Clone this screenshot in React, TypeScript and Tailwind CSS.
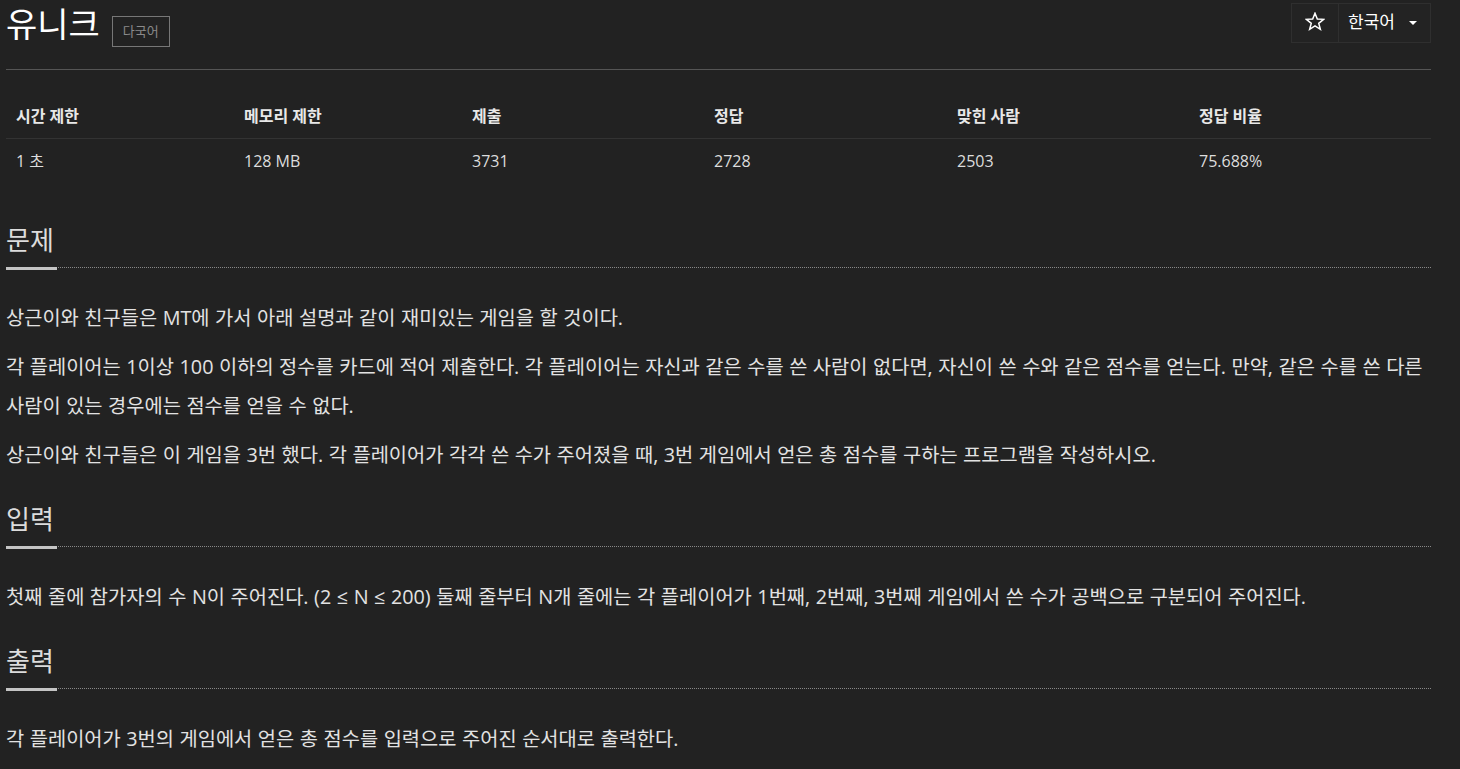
import React from "react";

function Section({ title, children }: { title: string; children: React.ReactNode }) {
  return (
    <section className="mb-[30px]">
      <div className="flex border-b border-dotted border-[#888]">
        <h2 className="text-[26px] leading-[30px] pb-[12px] pr-[3px] border-b-[3px] border-[#c4c4c4] -mb-[3px] font-normal text-[#dcdcdc]">
          {title}
        </h2>
      </div>
      <div className="pt-[30px]">{children}</div>
    </section>
  );
}

function P({ children }: { children: React.ReactNode }) {
  return (
    <p className="text-[19.8px] leading-[39px] mb-[10px] [word-spacing:0.4px] text-[#e2e2e2]">{children}</p>
  );
}

const headers = ["시간 제한", "메모리 제한", "제출", "정답", "맞힌 사람", "정답 비율"];
const values = ["1 초", "128 MB", "3731", "2728", "2503", "75.688%"];

export default function App() {
  return (
    <div className="min-h-screen bg-[#222222] text-[#dddddd] font-['Open_Sans','Noto_Sans_CJK_KR',sans-serif]">
      <div className="ml-[6px] w-[1425px]">
        {/* header */}
        <div className="flex items-start justify-between h-[70px] border-b border-[#555555]">
          <div className="flex items-start pt-[4px]">
            <h1 className="text-[34px] leading-[40px] text-white font-normal">유니크</h1>
            <span className="ml-[12px] mt-[12px] h-[31px] px-[10px] border border-[#777777] text-[13px] leading-[29px] text-[#8a8a8a]">
              다국어
            </span>
          </div>
          <div className="mt-[3px] flex h-[40px] border border-[#2f2f2f] bg-[#232323]">
            <button className="w-[47px] flex items-center justify-center border-r border-[#2f2f2f]">
              <svg width="20" height="19" viewBox="0 0 24 23" className="-mt-[4px]">
                <polygon
                  points="12,1.5 14.8,8.6 22.4,8.9 16.5,13.7 18.5,21 12,16.9 5.5,21 7.5,13.7 1.6,8.9 9.2,8.6"
                  fill="none"
                  stroke="white"
                  strokeWidth="1.8"
                  strokeLinejoin="miter"
                />
              </svg>
            </button>
            <button className="w-[91px] flex items-center pl-[9px] text-[17px] text-white">
              <span className="-mt-[2px]">한국어</span>
              <span className="ml-[14px] w-0 h-0 border-x-[4.5px] border-x-transparent border-t-[4.5px] border-t-white" />
            </button>
          </div>
        </div>

        {/* info table */}
        <div className="mt-[24px]">
          <div className="grid grid-cols-[228px_228px_242px_243px_242px_242px] h-[45px] border-b border-[#333333]">
            {headers.map((h) => (
              <div key={h} className="flex items-center pl-[10px] text-[16px] font-bold text-[#e8e8e8]">
                {h}
              </div>
            ))}
          </div>
          <div className="grid grid-cols-[228px_228px_242px_243px_242px_242px] h-[44px]">
            {values.map((v) => (
              <div key={v} className="flex items-center pl-[10px] text-[16px] text-[#dddddd]">
                {v}
              </div>
            ))}
          </div>
        </div>

        <div className="mt-[42px]">
          <Section title="문제">
            <P>상근이와 친구들은 MT에 가서 아래 설명과 같이 재미있는 게임을 할 것이다.</P>
            <P>
              각 플레이어는 1이상 100 이하의 정수를 카드에 적어 제출한다. 각 플레이어는 자신과 같은 수를 쓴 사람이 없다면, 자신이 쓴
              수와 같은 점수를 얻는다. 만약, 같은 수를 쓴 다른 사람이 있는 경우에는 점수를 얻을 수 없다.
            </P>
            <P>
              상근이와 친구들은 이 게임을 3번 했다. 각 플레이어가 각각 쓴 수가 주어졌을 때, 3번 게임에서 얻은 총 점수를 구하는
              프로그램을 작성하시오.
            </P>
          </Section>
          <Section title="입력">
            <P>
              첫째 줄에 참가자의 수 N이 주어진다. (2 ≤ N ≤ 200) 둘째 줄부터 N개 줄에는 각 플레이어가 1번째, 2번째, 3번째 게임에서 쓴
              수가 공백으로 구분되어 주어진다.
            </P>
          </Section>
          <Section title="출력">
            <P>각 플레이어가 3번의 게임에서 얻은 총 점수를 입력으로 주어진 순서대로 출력한다.</P>
          </Section>
        </div>
      </div>
    </div>
  );
}
